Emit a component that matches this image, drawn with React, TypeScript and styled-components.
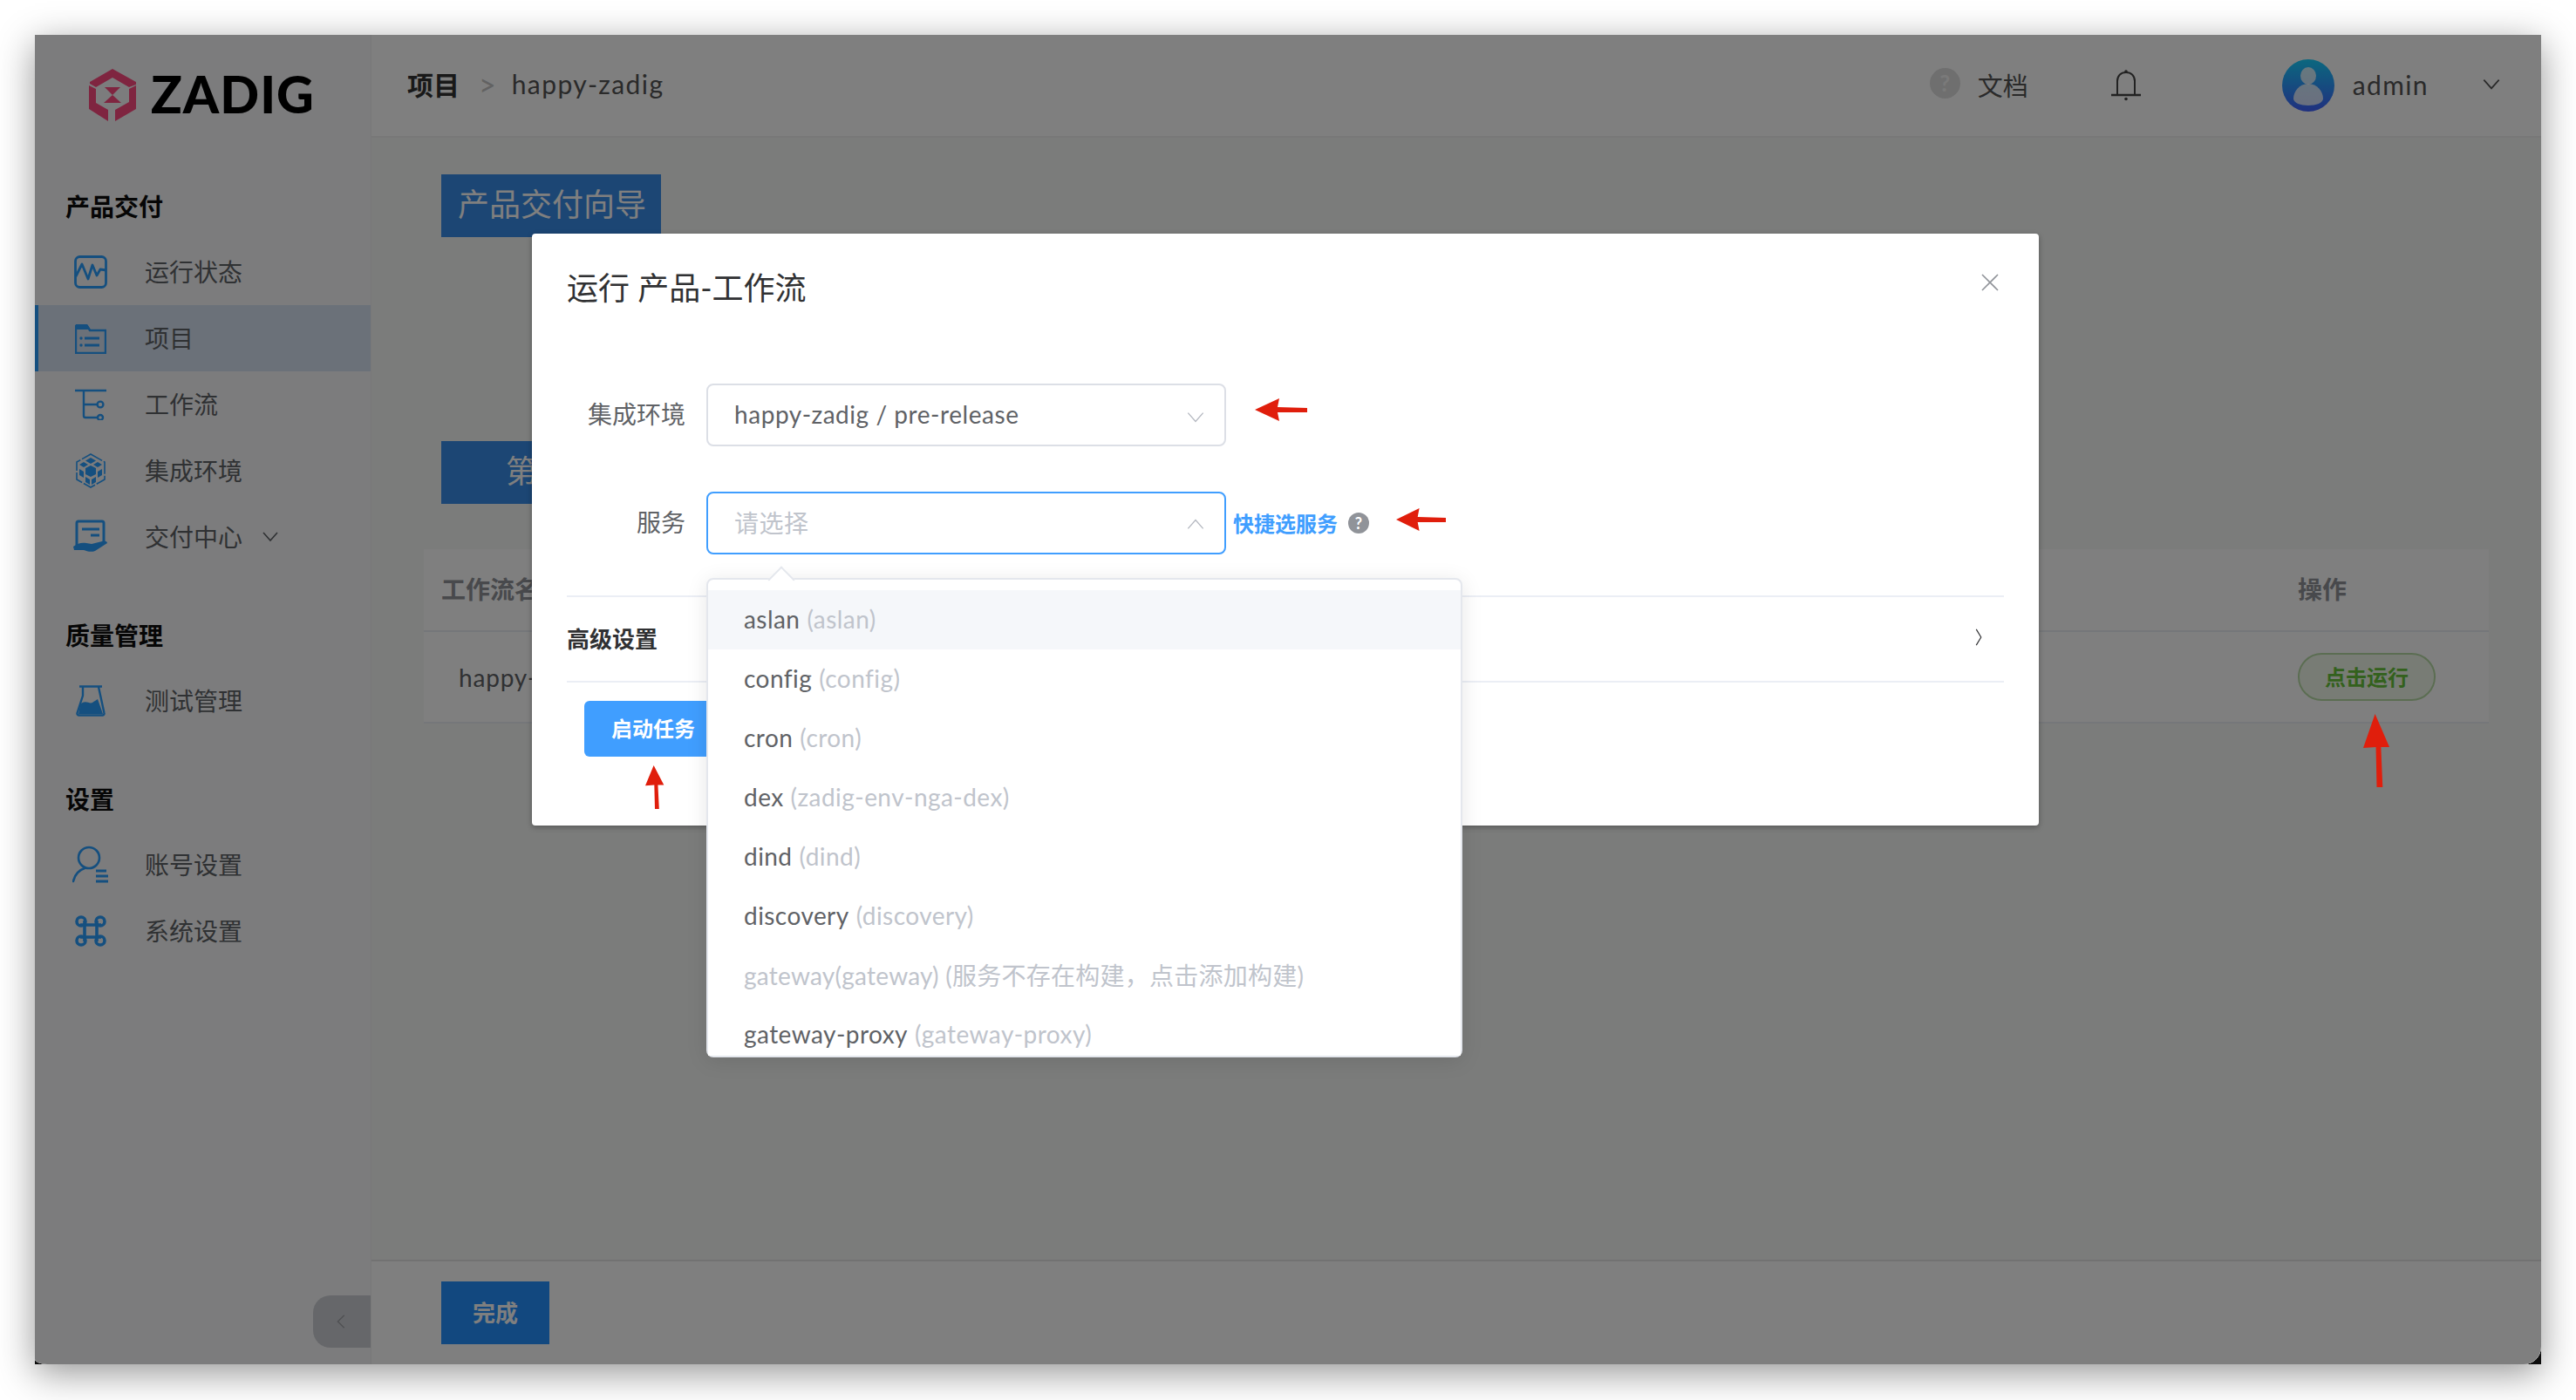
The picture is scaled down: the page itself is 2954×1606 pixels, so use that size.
import React from "react";
import styled, { createGlobalStyle } from "styled-components";

const FONT = `Lato, "Noto Sans CJK SC", sans-serif`;
const ICON = "#2a9fff";

const Global = createGlobalStyle`
  html, body { margin: 0; padding: 0; background: #fff; }
  body { font-family: ${FONT}; }
  * { box-sizing: border-box; }
`;

const Page = styled.div`
  width: 2954px;
  height: 1606px;
  padding: 40px;
  background: #fff;
  overflow: hidden;
`;
const Win = styled.div`
  width: 2874px;
  height: 1525px;
  background: #0c0c0c;
  box-shadow: 0 10px 40px rgba(0, 0, 0, 0.42);
`;
const Shell = styled.div`
  position: relative;
  width: 100%;
  height: 100%;
  display: flex;
  overflow: hidden;
  background: #fff;
  border-radius: 0 0 20px 14px / 0 0 20px 6px;
`;
const Overlay = styled.div`
  position: absolute;
  inset: 0;
  background: rgba(0, 0, 0, 0.5);
`;
const Sidebar = styled.aside`
  position: relative;
  width: 386px;
  flex: none;
  background: #f8f9fb;
  border-right: 1px solid #f0f0f3;
`;
const LogoBar = styled.div`
  height: 118px;
  padding: 19px 0 0 62px;
  display: flex;
  align-items: center;
  gap: 17px;
`;
const LogoText = styled.span`
  font-family: Lato, sans-serif;
  font-weight: 900;
  font-size: 59px;
  line-height: 1;
  letter-spacing: 1px;
  color: #000;
  padding-bottom: 2px;
`;
const NavWrap = styled.nav`
  padding-top: 4px;
`;
const NavGroup = styled.div`
  margin-top: 56px;
`;
const GroupTitle = styled.div`
  height: 40px;
  line-height: 38px;
  padding-left: 35px;
  margin-bottom: 16px;
  font-size: 28px;
  font-weight: 700;
  color: #0c0c0c;
`;
const NavRow = styled.div<{ $active?: boolean }>`
  height: 76px;
  display: flex;
  align-items: center;
  padding: 0 0 3px 40px;
  font-size: 28px;
  color: #5f6266;
  background: ${(p) => (p.$active ? "#d7e3f2" : "transparent")};
  box-shadow: ${(p) => (p.$active ? `inset 4px 0 0 ${ICON}` : "none")};
`;
const NavIcon = styled.span`
  width: 48px;
  margin: 3px 38px 0 0;
  display: flex;
  justify-content: center;
  color: ${ICON};
`;
const NavCaret = styled.span`
  margin-left: 20px;
  display: flex;
  color: #5f6266;
`;
const Collapse = styled.div`
  position: absolute;
  right: 0;
  bottom: 19px;
  width: 66px;
  height: 60px;
  border-radius: 20px 0 0 20px;
  background: #cdcfd4;
  display: flex;
  align-items: center;
  justify-content: center;
  color: #a0a2a8;
`;
const Main = styled.main`
  flex: 1;
  min-width: 0;
  display: flex;
  flex-direction: column;
  background: #f6f8f6;
`;
const Header = styled.header`
  height: 118px;
  flex: none;
  background: #fff;
  border-bottom: 2px solid #f0f0f0;
  display: flex;
  align-items: center;
  padding-left: 41px;
`;
const CrumbStrong = styled.span`
  padding-bottom: 4px;
  font-size: 30px;
  font-weight: 700;
  color: #333;
`;
const CrumbSep = styled.span`
  margin: 0 18px 0 22px;
  padding-bottom: 4px;
  font-size: 34px;
  color: #c4c4c4;
`;
const CrumbText = styled.span`
  padding-bottom: 4px;
  font-size: 30px;
  color: #555;
  letter-spacing: 1.4px;
`;
const HeaderRight = styled.div`
  margin-left: auto;
  display: flex;
  align-items: center;
  height: 100%;
`;
const HelpDot = styled.span`
  width: 35px;
  height: 35px;
  margin-bottom: 6px;
  border-radius: 50%;
  background: #dedede;
  color: #f4f4f4;
  font-size: 26px;
  font-weight: 700;
  display: flex;
  align-items: center;
  justify-content: center;
`;
const DocLabel = styled.span`
  margin-left: 20px;
  padding-bottom: 2px;
  font-size: 29px;
  color: #555;
`;
const BellWrap = styled.span`
  margin-left: 95px;
  display: flex;
  color: #444;
`;
const AvatarWrap = styled.span`
  margin-left: 162px;
  display: flex;
`;
const UserName = styled.span`
  margin-left: 21px;
  padding-bottom: 3px;
  font-size: 30px;
  letter-spacing: 1.4px;
  color: #555;
`;
const UserCaret = styled.span`
  margin: 0 44px 4px 59px;
  display: flex;
  color: #555;
`;
const Content = styled.div`
  flex: 1;
  padding: 42px 60px 0;
`;
const StepTitle = styled.div`
  margin-left: 20px;
  width: 252px;
  height: 72px;
  padding-left: 19px;
  background: #388ce8;
  color: #fff;
  font-size: 36px;
  line-height: 68px;
`;
const StepBar = styled(StepTitle)`
  margin-top: 234px;
  width: 300px;
  padding-left: 74px;
`;
const Table = styled.div`
  margin-top: 52px;
  background: #fff;
`;
const TRow = styled.div<{ $h: number }>`
  height: ${(p) => p.$h}px;
  padding: 0 61px 0 20px;
  display: flex;
  align-items: center;
  justify-content: space-between;
  border-bottom: 2px solid #ebeef5;
`;
const THead = styled.span`
  padding-bottom: 4px;
  font-size: 28px;
  font-weight: 700;
  color: #909399;
`;
const THeadOp = styled(THead)`
  width: 158px;
`;
const TCell = styled.span`
  padding-left: 20px;
  font-size: 28px;
  letter-spacing: 0.8px;
  color: #606266;
`;
const RunPill = styled.span`
  width: 158px;
  height: 55px;
  padding-bottom: 2px;
  border: 2px solid #b7dba5;
  border-radius: 28px;
  background: #f0f9eb;
  color: #67c23a;
  font-size: 24px;
  font-weight: 700;
  display: flex;
  align-items: center;
  justify-content: center;
`;
const Footer = styled.footer`
  height: 120px;
  flex: none;
  background: #fff;
  border-top: 2px solid #e4e4e4;
  padding: 23px 0 0 80px;
`;
const DoneBtn = styled.div`
  width: 124px;
  height: 72px;
  padding-bottom: 4px;
  background: #2491ff;
  color: #fff;
  font-size: 26px;
  font-weight: 700;
  display: flex;
  align-items: center;
  justify-content: center;
`;
const Modal = styled.section`
  position: absolute;
  left: 570px;
  top: 228px;
  width: 1728px;
  height: 679px;
  padding: 0 40px;
  background: #fff;
  border-radius: 4px;
  box-shadow: 0 2px 6px rgba(0, 0, 0, 0.3);
`;
const ModalHead = styled.div`
  height: 172px;
  padding-top: 40px;
  display: flex;
  justify-content: space-between;
  align-items: flex-start;
`;
const ModalTitle = styled.h2`
  margin: 0;
  font-size: 36px;
  font-weight: 400;
  line-height: 44px;
  color: #303133;
`;
const CloseBtn = styled.span`
  margin: 5px 5px 0 0;
  display: flex;
  color: #909399;
`;
const FormRow = styled.div`
  display: flex;
  align-items: center;
  height: 72px;
  margin-bottom: 52px;
`;
const FormLabel = styled.label`
  width: 136px;
  margin-right: 24px;
  padding-bottom: 4px;
  text-align: right;
  font-size: 28px;
  color: #606266;
`;
const Select = styled.div<{ $focus?: boolean }>`
  width: 596px;
  height: 72px;
  padding: 0 20px 0 30px;
  border: 2px solid ${(p) => (p.$focus ? "#409eff" : "#dcdfe6")};
  border-radius: 8px;
  display: flex;
  align-items: center;
  justify-content: space-between;
  font-size: 28px;
  letter-spacing: 0.55px;
  color: ${(p) => (p.$focus ? "#c0c4cc" : "#606266")};
`;
const SelectText = styled.span`
  padding-bottom: 3px;
`;
const SelectCaret = styled.span`
  display: flex;
  padding-top: 3px;
  color: #b4b8c0;
`;
const QuickLink = styled.span`
  margin-left: 8px;
  padding-bottom: 2px;
  font-size: 24px;
  font-weight: 700;
  color: #409eff;
`;
const TipDot = styled.span`
  margin-left: 12px;
  width: 24px;
  height: 24px;
  border-radius: 50%;
  background: #909399;
  color: #fff;
  font-size: 18px;
  font-weight: 700;
  display: flex;
  align-items: center;
  justify-content: center;
`;
const Advanced = styled.div`
  height: 100px;
  margin-top: -5px;
  padding: 0 18px 4px 0;
  border-top: 2px solid #ebeef5;
  border-bottom: 2px solid #ebeef5;
  display: flex;
  align-items: center;
  justify-content: space-between;
  font-size: 26px;
  font-weight: 700;
  color: #303133;
`;
const AdvancedCaret = styled.span`
  display: flex;
  color: #303133;
`;
const StartBtn = styled.div`
  margin: 21px 0 0 20px;
  width: 158px;
  height: 64px;
  padding-bottom: 4px;
  border-radius: 6px;
  background: #409eff;
  color: #fff;
  font-size: 24px;
  font-weight: 700;
  display: flex;
  align-items: center;
  justify-content: center;
`;
const Dropdown = styled.div`
  position: absolute;
  left: 770px;
  top: 623px;
  width: 867px;
  height: 550px;
  padding-top: 12px;
  background: #fff;
  border: 2px solid #e4e7ed;
  border-radius: 8px;
  box-shadow: 0 4px 24px rgba(0, 0, 0, 0.1);
  &::before {
    content: "";
    position: absolute;
    left: 73px;
    top: -11px;
    width: 20px;
    height: 20px;
    background: #fff;
    border-left: 2px solid #e4e7ed;
    border-top: 2px solid #e4e7ed;
    transform: rotate(45deg);
  }
`;
const OptionList = styled.div`
  position: relative;
  height: 100%;
  overflow: hidden;
`;
const Option = styled.div<{ $hover?: boolean; $disabled?: boolean }>`
  height: 68px;
  padding: 0 0 3px 41px;
  display: flex;
  align-items: center;
  gap: 8px;
  font-size: 28px;
  letter-spacing: ${(p) => (p.$disabled ? "0.25px" : "0.45px")};
  white-space: nowrap;
  background: ${(p) => (p.$hover ? "#f5f7fa" : "#fff")};
  color: ${(p) => (p.$disabled ? "#c0c4cc" : "#606266")};
`;
const OptionSub = styled.span`
  color: #c0c4cc;
`;
const Mark = styled.svg<{ $x: number; $y: number }>`
  position: absolute;
  left: ${(p) => p.$x}px;
  top: ${(p) => p.$y}px;
`;

const Chevron = ({ dir, size = 24, w = 1.6 }: { dir: "down" | "up" | "left" | "right"; size?: number; w?: number }) => {
  const d = {
    down: "M4 8l8 9 8-9",
    up: "M4 16l8-9 8 9",
    left: "M15 4l-8 8 8 8",
    right: "M9 2l6 10-6 10",
  }[dir];
  return (
    <svg width={size} height={size} viewBox="0 0 24 24" fill="none" stroke="currentColor" strokeWidth={w}>
      <path d={d} />
    </svg>
  );
};

const Logo = () => (
  <svg width="54" height="60" viewBox="0 0 54 60">
    <g fill="#ff4a80">
      <polygon points="27,0 54,15 54,18 46,21 27,10 8,21 1,17 1,15" />
      <polygon points="0,19 8,23 8,39 22,47 22,60 0,46" />
      <polygon points="54,19 54,46 30,60 30,47 46,38 46,23" />
      <polygon points="18,21 36,21 27,30" />
      <polygon points="27,30 37,39 17,39" />
    </g>
  </svg>
);

const IconPulse = () => (
  <svg width="38" height="38" viewBox="0 0 38 38" fill="none" stroke="currentColor" strokeWidth="2.8" strokeLinejoin="round">
    <rect x="1.5" y="1.5" width="35" height="35" rx="5" />
    <path d="M2 24l7-14 7 17 5-16 5 12 4-7 7 1" />
  </svg>
);
const IconFolder = () => (
  <svg width="36" height="36" viewBox="0 0 36 36" fill="none" stroke="currentColor" strokeWidth="2.4">
    <path d="M1 4h13l3 5h18v26H1z" fill="none" />
    <path d="M1 2h13l4 6H1z" fill="currentColor" stroke="none" />
    <path d="M11 18h17M11 26h17" strokeWidth="3" />
    <circle cx="7" cy="18" r="1.7" fill="currentColor" stroke="none" />
    <circle cx="7" cy="26" r="1.7" fill="currentColor" stroke="none" />
  </svg>
);
const IconFlow = () => (
  <svg width="36" height="36" viewBox="0 0 36 36" fill="none" stroke="currentColor" strokeWidth="2.4">
    <path d="M0 2h36M10 2v29a2 2 0 0 0 2 2h14M10 18h16" />
    <circle cx="29" cy="18" r="3.4" />
    <circle cx="29" cy="33" r="3" />
  </svg>
);
const IconCube = () => (
  <svg width="36" height="40" viewBox="0 0 36 40">
    <path d="M18 1l16 9v20l-16 9-16-9V10z" fill="none" stroke="currentColor" strokeWidth="1.6" strokeDasharray="15 2" />
    <g fill="currentColor">
      <path d="M18 5l6 3.5-6 3.5-6-3.5z" />
      <path d="M18 14l6 3v7l-6 3-6-3v-7z" />
      <path d="M10 10l5 3-5 3-5-3z" />
      <path d="M26 10l5 3-5 3-5-3z" />
      <path d="M5 18l5 3v7l-5-3z" />
      <path d="M31 18l-5 3v7l5-3z" />
      <path d="M12 27l5 3v6l-5-3z" />
      <path d="M24 27l-5 3v6l5-3z" />
    </g>
  </svg>
);
const IconDelivery = () => (
  <svg width="40" height="40" viewBox="0 0 40 40" fill="none" stroke="currentColor">
    <path d="M4 30V4a2 2 0 0 1 2-2h27a2 2 0 0 1 2 2v24" strokeWidth="3" />
    <path d="M10 11h20M20 18h10" strokeWidth="2.8" />
    <path d="M0 31c5-4 10-5 15-4l6 1 12-3c3-1 6 0 6 2l-14 9c-5 2-10 0-13-1l-11 0z" fill="currentColor" stroke="none" />
  </svg>
);
const IconFlask = () => (
  <svg width="34" height="36" viewBox="0 0 34 36" fill="none" stroke="currentColor" strokeWidth="2.4">
    <path d="M4 1.5h26M8 2v10L1.5 32a2 2 0 0 0 2 2.5h27a2 2 0 0 0 2-2.5L26 2" strokeLinejoin="round" />
    <path d="M5 22c6-6 10 0 14-2 2-2 5-3 6-4l6 17H3z" fill="currentColor" stroke="none" />
  </svg>
);
const IconUser = () => (
  <svg width="42" height="44" viewBox="0 0 42 44" fill="none" stroke="currentColor" strokeWidth="2.6" strokeLinecap="round">
    <circle cx="19" cy="14" r="12" />
    <path d="M1 41c2-9 7-13 13-15" />
    <path d="M27 29h12M27 35h14M27 41h14" strokeWidth="3" strokeLinecap="butt" />
  </svg>
);
const IconCommand = () => (
  <svg width="36" height="36" viewBox="0 0 36 36" fill="none" stroke="currentColor" strokeWidth="3.6">
    <path d="M11 6v24M25 6v24M6 11h24M6 25h24" />
    <circle cx="7" cy="7" r="5" />
    <circle cx="29" cy="7" r="5" />
    <circle cx="7" cy="29" r="5" />
    <circle cx="29" cy="29" r="5" />
  </svg>
);
const IconBell = () => (
  <svg width="34" height="36" viewBox="0 0 34 36" fill="none" stroke="currentColor" strokeWidth="2">
    <path d="M7 29V13C7 7 11 3 17 3s10 4 10 10v16" />
    <path d="M0 29h34" strokeWidth="2.4" />
    <circle cx="17" cy="2" r="1.8" fill="currentColor" stroke="none" />
    <circle cx="17" cy="33.5" r="1.8" fill="currentColor" stroke="none" />
  </svg>
);
const Avatar = () => (
  <svg width="60" height="60" viewBox="0 0 60 60">
    <defs>
      <linearGradient id="av" x1="0" y1="0" x2="0" y2="1">
        <stop offset="0" stopColor="#17d0ff" />
        <stop offset="1" stopColor="#4060ff" />
      </linearGradient>
    </defs>
    <circle cx="30" cy="30" r="30" fill="url(#av)" />
    <ellipse cx="30" cy="19" rx="9" ry="10" fill="#fff" fillOpacity="0.78" />
    <path d="M30 28c10 0 17 9 17 17 0 5-8 8-17 8s-17-3-17-8c0-8 7-17 17-17z" fill="#fff" fillOpacity="0.78" />
  </svg>
);

const ArrowLeft = ({ x, y, w = 60 }: { x: number; y: number; w?: number }) => (
  <Mark $x={x} $y={y} width={w} height="26" viewBox="0 0 60 26" preserveAspectRatio="none">
    <polygon points="0,13 28,0 26,10 60,11 60,16 26,16 28,26" fill="#e01e0c" />
  </Mark>
);
const ArrowUp = ({ x, y, w, h }: { x: number; y: number; w: number; h: number }) => (
  <Mark $x={x} $y={y} width={w} height={h} viewBox="0 0 32 84" preserveAspectRatio="none">
    <polygon points="14,0 31,38 21,38 23,84 16,84 15,38 0,39" fill="#e01e0c" />
  </Mark>
);

const groups = [
  {
    title: "产品交付",
    items: [
      { label: "运行状态", icon: <IconPulse /> },
      { label: "项目", icon: <IconFolder />, active: true },
      { label: "工作流", icon: <IconFlow /> },
      { label: "集成环境", icon: <IconCube /> },
      { label: "交付中心", icon: <IconDelivery />, caret: true },
    ],
  },
  { title: "质量管理", items: [{ label: "测试管理", icon: <IconFlask /> }] },
  {
    title: "设置",
    items: [
      { label: "账号设置", icon: <IconUser /> },
      { label: "系统设置", icon: <IconCommand /> },
    ],
  },
];

const options: { name: string; sub?: string; disabled?: boolean }[] = [
  { name: "aslan", sub: "(aslan)" },
  { name: "config", sub: "(config)" },
  { name: "cron", sub: "(cron)" },
  { name: "dex", sub: "(zadig-env-nga-dex)" },
  { name: "dind", sub: "(dind)" },
  { name: "discovery", sub: "(discovery)" },
  { name: "gateway(gateway) (服务不存在构建，点击添加构建)", disabled: true },
  { name: "gateway-proxy", sub: "(gateway-proxy)" },
];

export default function App() {
  return (
    <>
      <Global />
      <Page>
        <Win>
          <Shell>
            <Sidebar>
              <LogoBar>
                <Logo />
                <LogoText>ZADIG</LogoText>
              </LogoBar>
              <NavWrap>
                {groups.map((g) => (
                  <NavGroup key={g.title}>
                    <GroupTitle>{g.title}</GroupTitle>
                    {g.items.map((it: any) => (
                      <NavRow key={it.label} $active={it.active}>
                        <NavIcon>{it.icon}</NavIcon>
                        {it.label}
                        {it.caret && (
                          <NavCaret>
                            <Chevron dir="down" size={24} />
                          </NavCaret>
                        )}
                      </NavRow>
                    ))}
                  </NavGroup>
                ))}
              </NavWrap>
              <Collapse>
                <Chevron dir="left" size={22} />
              </Collapse>
            </Sidebar>
            <Main>
              <Header>
                <CrumbStrong>项目</CrumbStrong>
                <CrumbSep>&gt;</CrumbSep>
                <CrumbText>happy-zadig</CrumbText>
                <HeaderRight>
                  <HelpDot>?</HelpDot>
                  <DocLabel>文档</DocLabel>
                  <BellWrap>
                    <IconBell />
                  </BellWrap>
                  <AvatarWrap>
                    <Avatar />
                  </AvatarWrap>
                  <UserName>admin</UserName>
                  <UserCaret>
                    <Chevron dir="down" size={26} />
                  </UserCaret>
                </HeaderRight>
              </Header>
              <Content>
                <StepTitle>产品交付向导</StepTitle>
                <StepBar>第</StepBar>
                <Table>
                  <TRow $h={95}>
                    <THead>工作流名称</THead>
                    <THeadOp>操作</THeadOp>
                  </TRow>
                  <TRow $h={105}>
                    <TCell>happy-zadig</TCell>
                    <RunPill>点击运行</RunPill>
                  </TRow>
                </Table>
              </Content>
              <Footer>
                <DoneBtn>完成</DoneBtn>
              </Footer>
            </Main>
            <Overlay />
            <Modal>
              <ModalHead>
                <ModalTitle>运行 产品-工作流</ModalTitle>
                <CloseBtn>
                  <svg width="22" height="22" viewBox="0 0 22 22" fill="none" stroke="currentColor" strokeWidth="1.6">
                    <path d="M2 2l18 18M20 2L2 20" />
                  </svg>
                </CloseBtn>
              </ModalHead>
              <FormRow>
                <FormLabel>集成环境</FormLabel>
                <Select>
                  <SelectText>happy-zadig / pre-release</SelectText>
                  <SelectCaret>
                    <Chevron dir="down" size={26} w={1.2} />
                  </SelectCaret>
                </Select>
              </FormRow>
              <FormRow>
                <FormLabel>服务</FormLabel>
                <Select $focus>
                  <SelectText>请选择</SelectText>
                  <SelectCaret>
                    <Chevron dir="up" size={26} w={1.2} />
                  </SelectCaret>
                </Select>
                <QuickLink>快捷选服务</QuickLink>
                <TipDot>?</TipDot>
              </FormRow>
              <Advanced>
                高级设置
                <AdvancedCaret>
                  <Chevron dir="right" size={22} w={1.3} />
                </AdvancedCaret>
              </Advanced>
              <StartBtn>启动任务</StartBtn>
            </Modal>
            <Dropdown>
              <OptionList>
                {options.map((o, i) => (
                  <Option key={o.name} $hover={i === 0} $disabled={o.disabled}>
                    {o.name}
                    {o.sub && <OptionSub>{o.sub}</OptionSub>}
                  </Option>
                ))}
              </OptionList>
            </Dropdown>
            <ArrowLeft x={1399} y={417} />
            <ArrowLeft x={1561} y={543} w={57} />
            <ArrowUp x={700} y={838} w={22} h={50} />
            <ArrowUp x={2670} y={779} w={31} h={84} />
          </Shell>
        </Win>
      </Page>
    </>
  );
}
